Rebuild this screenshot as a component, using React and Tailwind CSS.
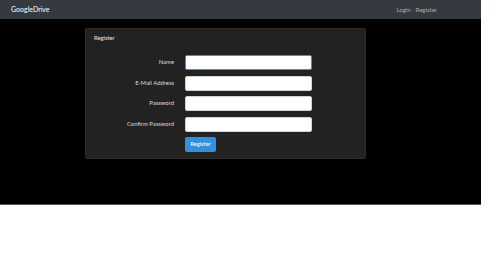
import React from "react";

const rows = ["Name", "E-Mail Address", "Password", "Confirm Password"];

export default function App() {
  return (
    <div className="w-[481px] h-[205px] bg-black border-b border-[#5a5a5a] font-['Lato',sans-serif]">
      {/* navbar */}
      <nav className="h-[19px] bg-[#343a40] flex items-center pl-[11px] pr-[44px]">
        <span className="text-[7px] text-white">GoogleDrive</span>
        <div className="ml-auto flex gap-[5px] text-[6px] text-[#a9abad]">
          <span>Login</span>
          <span>Register</span>
        </div>
      </nav>

      <div className="ml-[85px] mt-[9px] w-[281px] h-[131px] bg-[#222222] border border-[#2c2c2c] rounded-[2px]">
        <div className="h-[19px] flex items-center px-[8px] text-[5.8px] text-[#e6e6e6]">Register</div>

        <form className="pt-[7px] flex flex-col gap-[5.5px]">
          {rows.map((label, i) => (
            <div key={label} className="flex items-center gap-[11px]">
              <label className="w-[88px] text-right text-[5.9px] text-[#dcdcdc]">{label}</label>
              <input
                type={i >= 2 ? "password" : "text"}
                className={
                  "w-[127px] h-[15px] bg-white rounded-[2px] outline-none " +
                  (i === 0 ? "border border-[#4a8ccc]" : "border border-[#cfd4da]")
                }
              />
            </div>
          ))}
          <div className="flex">
            <button
              type="button"
              className="ml-[99px] w-[31px] h-[15px] bg-[#3490dc] rounded-[2px] text-[5.8px] text-white"
            >
              Register
            </button>
          </div>
        </form>
      </div>
    </div>
  );
}
